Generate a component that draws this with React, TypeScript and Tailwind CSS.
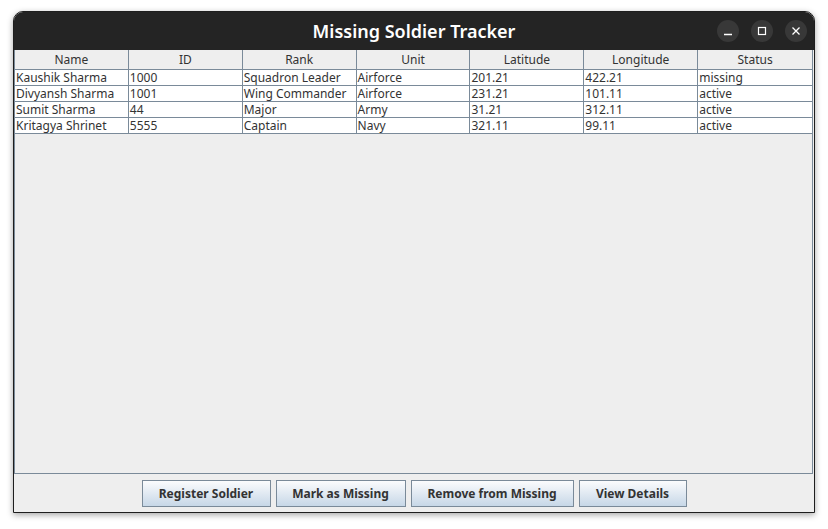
import React from 'react';

const columns = ['Name', 'ID', 'Rank', 'Unit', 'Latitude', 'Longitude', 'Status'];

const soldiers = [
  ['Kaushik Sharma', '1000', 'Squadron Leader', 'Airforce', '201.21', '422.21', 'missing'],
  ['Divyansh Sharma', '1001', 'Wing Commander', 'Airforce', '231.21', '101.11', 'active'],
  ['Sumit Sharma', '44', 'Major', 'Army', '31.21', '312.11', 'active'],
  ['Kritagya Shrinet', '5555', 'Captain', 'Navy', '321.11', '99.11', 'active'],
];

const buttons = [
  { label: 'Register Soldier', w: 'w-[129px]' },
  { label: 'Mark as Missing', w: 'w-[130px]' },
  { label: 'Remove from Missing', w: 'w-[163px]' },
  { label: 'View Details', w: 'w-[108px]' },
];

function TitleButton({ children }: { children: React.ReactNode }) {
  return (
    <div className="w-[22px] h-[22px] rounded-full bg-[#383838] flex items-center justify-center">
      {children}
    </div>
  );
}

export default function App() {
  return (
    <div className="w-[828px] h-[529px] bg-white pt-[11px] pl-[13px]" style={{ fontFamily: '"Noto Sans", "Open Sans", sans-serif' }}>
      <div className="w-[802px] h-[502px] flex flex-col rounded-t-[10px] border border-[#1e1e1e] bg-[#eeeeee] shadow-[0_2px_6px_rgba(0,0,0,0.35)] overflow-hidden">
        {/* title bar */}
        <div className="relative h-[38px] shrink-0 bg-[#242424] flex items-center justify-center">
          <span className="text-white text-[18px] font-semibold leading-none">Missing Soldier Tracker</span>
          <div className="absolute right-[7px] top-[8px] flex gap-[12px]">
            <TitleButton>
              <svg width="10" height="10" viewBox="0 0 10 10"><path d="M1 8.5h8" stroke="#fff" strokeWidth="1.3" /></svg>
            </TitleButton>
            <TitleButton>
              <svg width="10" height="10" viewBox="0 0 10 10"><rect x="1.5" y="1.5" width="7" height="7" fill="none" stroke="#fff" strokeWidth="1.2" /></svg>
            </TitleButton>
            <TitleButton>
              <svg width="10" height="10" viewBox="0 0 10 10"><path d="M1.5 1.5l7 7M8.5 1.5l-7 7" stroke="#fff" strokeWidth="1.3" /></svg>
            </TitleButton>
          </div>
        </div>

        {/* table area */}
        <div className="flex-1 mr-[1px] border-l border-r border-b border-[#7a8a99] flex flex-col text-[12px] text-[#333333]">
          <div className="flex h-[20px] border-b border-[#7a8a99] bg-[#eeeeee]">
            {columns.map((c, i) => (
              <div key={c} className={`w-[114px] flex items-center justify-center ${i < columns.length - 1 ? 'border-r border-[#7a8a99]' : ''}`}>
                {c}
              </div>
            ))}
          </div>
          {soldiers.map((row, r) => (
            <div key={r} className="flex h-[16px] border-b border-[#7a8a99] bg-white">
              {row.map((v, i) => (
                <div key={i} className={`w-[114px] pl-[1px] leading-[15px] whitespace-nowrap overflow-hidden ${i < row.length - 1 ? 'border-r border-[#7a8a99]' : ''}`}>
                  {v}
                </div>
              ))}
            </div>
          ))}
        </div>

        {/* button bar */}
        <div className="h-[38px] shrink-0 flex items-start justify-center gap-[5px] pt-[6px]">
          {buttons.map((b) => (
            <div
              key={b.label}
              className={`${b.w} h-[27px] flex items-center justify-center border border-[#7a8a99] bg-gradient-to-b from-[#fbfcfd] to-[#c7d7e7] text-[12px] font-bold text-[#333333]`}
            >
              {b.label}
            </div>
          ))}
        </div>
      </div>
    </div>
  );
}
